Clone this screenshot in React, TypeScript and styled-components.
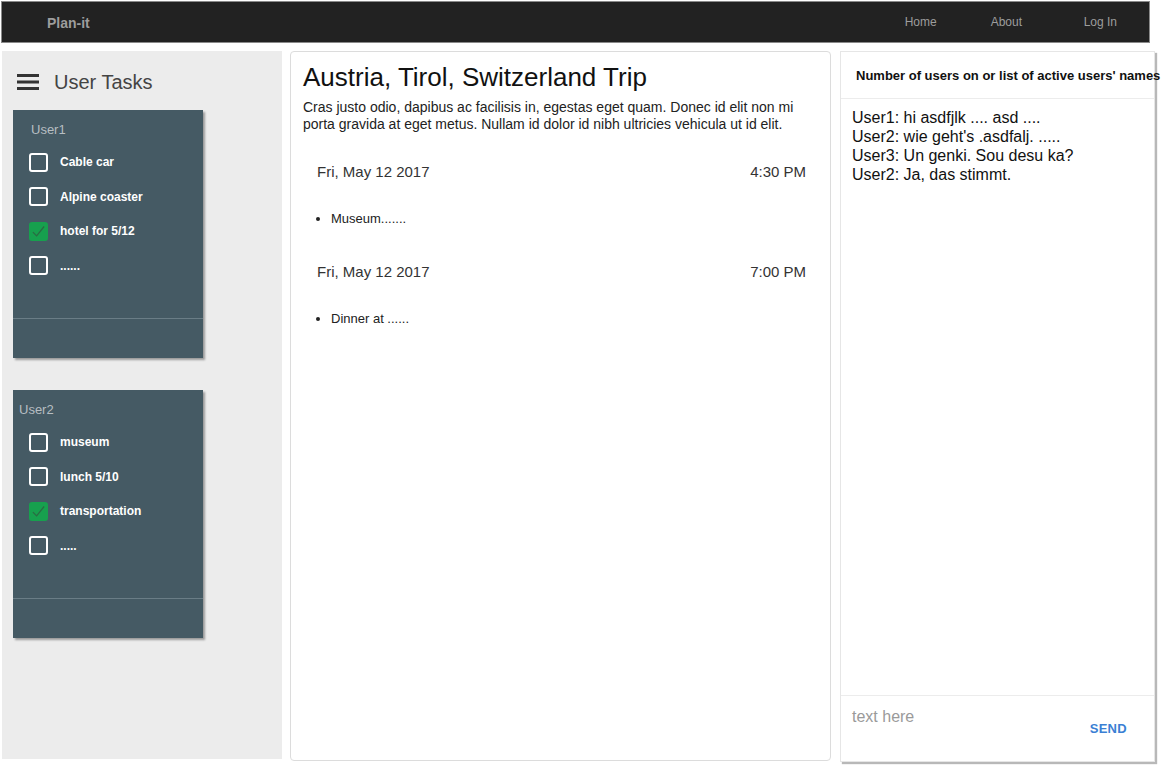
import React from "react";
import styled, { createGlobalStyle } from "styled-components";

const Global = createGlobalStyle`
  html, body { margin: 0; padding: 0; background: #fff; }
  body { font-family: "Liberation Sans", Arial, sans-serif; width: 1161px; height: 765px; overflow: hidden; }
  * { box-sizing: border-box; }
`;

const Nav = styled.nav`
  margin: 1px 11px 0 1px;
  height: 42px;
  background: #222;
  border: 1px solid #8a8a8a;
  display: flex;
  align-items: center;
  padding: 0 32px 0 45px;
`;

const Brand = styled.div`
  color: #9d9d9d;
  font-weight: bold;
  font-size: 14px;
  flex: 1;
  margin-top: 2px;
`;

const NavLink = styled.a<{ $w?: number }>`
  color: #9d9d9d;
  font-size: 12px;
  width: ${(p) => (p.$w ? `${p.$w}px` : "auto")};
  white-space: nowrap;
  text-decoration: none;
  margin-top: -1px;
`;

const Main = styled.div`
  display: flex;
  align-items: flex-start;
  margin-top: 8px;
  padding-left: 2px;
`;

const Sidebar = styled.aside`
  width: 280px;
  height: 708px;
  background: #ececec;
  padding: 13px 0 0 11px;
`;

const SideHead = styled.div`
  display: flex;
  align-items: center;
  gap: 15px;
  padding-left: 4px;
  height: 36px;
  color: #444;
  font-size: 20px;
  margin-bottom: 10px;
`;

const TaskCard = styled.div<{ $pad: number }>`
  width: 190px;
  height: 248px;
  background: #455a64;
  box-shadow: 2px 2px 2px rgba(0, 0, 0, 0.35);
  display: flex;
  flex-direction: column;
  margin-bottom: 32px;
  .owner { padding-left: ${(p) => p.$pad}px; }
`;

const Owner = styled.div`
  color: #b7bec2;
  font-size: 13px;
  padding-top: 12px;
  height: 43px;
`;

const TaskList = styled.div`
  padding-left: 16px;
  display: flex;
  flex-direction: column;
  gap: 16px;
  height: 165px;
`;

const TaskRow = styled.label`
  display: flex;
  align-items: center;
  gap: 12px;
  height: 18.5px;
  color: #fff;
  font-weight: bold;
  font-size: 12px;
`;

const Box = styled.span<{ $on: boolean }>`
  width: 19px;
  height: 19px;
  border-radius: 3px;
  border: ${(p) => (p.$on ? "none" : "2px solid #fff")};
  background: ${(p) => (p.$on ? "#17a04e" : "transparent")};
  display: flex;
  align-items: center;
  justify-content: center;
  flex: none;
`;

const CardFoot = styled.div`
  border-top: 1px solid #6a7d86;
  flex: 1;
`;

const Center = styled.section`
  margin-left: 8px;
  width: 541px;
  height: 710px;
  border: 1px solid #dcdcdc;
  border-radius: 4px;
  padding: 10px 12px;
  color: #222;
`;

const Title = styled.h1`
  margin: 0;
  font-weight: normal;
  font-size: 26px;
  line-height: 30px;
  color: #111;
`;

const Lead = styled.p`
  margin: 7px 0 28px;
  font-size: 14px;
  line-height: 17px;
  width: 500px;
`;

const Event = styled.div`
  padding: 0 12px 0 14px;
`;

const EventHead = styled.div`
  display: flex;
  justify-content: space-between;
  font-size: 15px;
  color: #333;
  height: 20px;
  align-items: center;
`;

const Items = styled.ul`
  margin: 30px 0 34px;
  padding-left: 14px;
  font-size: 13px;
  color: #222;
  li { line-height: 16px; }
`;

const Chat = styled.aside`
  margin-left: 9px;
  width: 315px;
  height: 711px;
  background: #fff;
  border: 1px solid #e6e6e6;
  box-shadow: 2px 2px 1px rgba(0, 0, 0, 0.28);
  display: flex;
  flex-direction: column;
`;

const ChatHead = styled.div`
  height: 47px;
  border-bottom: 1px solid #ececec;
  display: flex;
  align-items: center;
  padding: 0 0 0 15px;
  font-size: 13px;
  font-weight: bold;
  color: #111;
  white-space: nowrap;
`;

const Messages = styled.div`
  flex: 1;
  padding: 9px 11px;
  font-size: 16px;
  line-height: 19px;
  color: #111;
`;

const Compose = styled.div`
  height: 66px;
  border-top: 1px solid #ececec;
  display: flex;
  justify-content: space-between;
  padding: 12px 27px 0 11px;
`;

const Placeholder = styled.div`
  color: #9a9a9a;
  font-size: 16px;
`;

const Send = styled.button`
  background: none;
  border: none;
  padding: 0;
  margin-top: 11px;
  height: 18px;
  color: #3b7fd4;
  font-family: "Liberation Sans", Arial, sans-serif;
  font-weight: bold;
  font-size: 13px;
  letter-spacing: 0.3px;
`;

const Check = () => (
  <svg width="15" height="15" viewBox="0 0 24 24">
    <path d="M3 13 L9 19 L21 4" fill="none" stroke="#2b6a43" strokeWidth="2" />
  </svg>
);

const Burger = () => (
  <svg width="22" height="16" viewBox="0 0 22 16">
    <rect x="0" y="0" width="22" height="3" fill="#333" />
    <rect x="0" y="6.5" width="22" height="3" fill="#333" />
    <rect x="0" y="13" width="22" height="3" fill="#333" />
  </svg>
);

const users = [
  { name: "User1", pad: 18, tasks: [["Cable car", false], ["Alpine coaster", false], ["hotel for 5/12", true], ["......", false]] },
  { name: "User2", pad: 6, tasks: [["museum", false], ["lunch 5/10", false], ["transportation", true], [".....", false]] },
] as { name: string; pad: number; tasks: [string, boolean][] }[];

const events = [
  { date: "Fri, May 12 2017", time: "4:30 PM", items: ["Museum......."] },
  { date: "Fri, May 12 2017", time: "7:00 PM", items: ["Dinner at ......"] },
];

const messages = [
  "User1: hi asdfjlk .... asd ....",
  "User2: wie geht's .asdfalj. .....",
  "User3: Un genki. Sou desu ka?",
  "User2: Ja, das stimmt.",
];

export default function App() {
  return (
    <>
      <Global />
      <Nav>
        <Brand>Plan-it</Brand>
        <NavLink $w={86}>Home</NavLink>
        <NavLink $w={93}>About</NavLink>
        <NavLink>Log In</NavLink>
      </Nav>
      <Main>
        <Sidebar>
          <SideHead>
            <Burger />
            User Tasks
          </SideHead>
          {users.map((u) => (
            <TaskCard key={u.name} $pad={u.pad}>
              <Owner className="owner">{u.name}</Owner>
              <TaskList>
                {u.tasks.map(([t, on]) => (
                  <TaskRow key={t}>
                    <Box $on={on}>{on && <Check />}</Box>
                    {t}
                  </TaskRow>
                ))}
              </TaskList>
              <CardFoot />
            </TaskCard>
          ))}
        </Sidebar>
        <Center>
          <Title>Austria, Tirol, Switzerland Trip</Title>
          <Lead>
            Cras justo odio, dapibus ac facilisis in, egestas eget quam. Donec id elit non mi porta gravida at eget
            metus. Nullam id dolor id nibh ultricies vehicula ut id elit.
          </Lead>
          {events.map((e, i) => (
            <Event key={i}>
              <EventHead>
                <span>{e.date}</span>
                <span>{e.time}</span>
              </EventHead>
              <Items>
                {e.items.map((it) => (
                  <li key={it}>{it}</li>
                ))}
              </Items>
            </Event>
          ))}
        </Center>
        <Chat>
          <ChatHead>Number of users on or list of active users' names</ChatHead>
          <Messages>
            {messages.map((m, i) => (
              <div key={i}>{m}</div>
            ))}
          </Messages>
          <Compose>
            <Placeholder>text here</Placeholder>
            <Send>SEND</Send>
          </Compose>
        </Chat>
      </Main>
    </>
  );
}
